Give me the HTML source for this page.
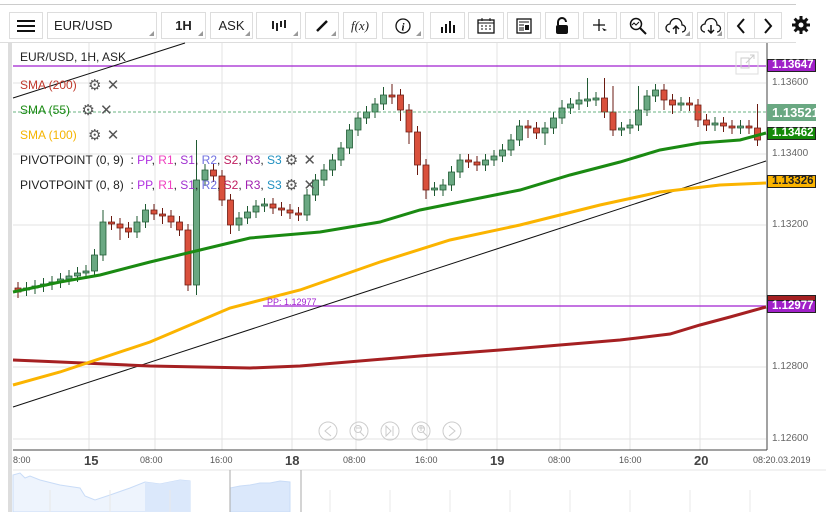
<!DOCTYPE html>
<html><head><meta charset="utf-8"><style>
body{margin:0;width:826px;height:512px;background:#fff;overflow:hidden;font-family:"Liberation Sans",sans-serif;position:relative}
.tb{position:absolute;top:12px;height:27px;border:1px solid #ddd;box-sizing:border-box;background:#fff;font-size:13px;color:#222;display:flex;align-items:center;justify-content:center}
.tb.dd::after{content:"";position:absolute;right:2px;bottom:2px;border-left:5px solid transparent;border-bottom:5px solid #999}
.lg{position:absolute;left:20px;font-size:12px}
.ic{color:#555;font-size:15px;font-weight:bold;margin-left:8px;position:relative;top:1px;font-family:"DejaVu Sans",sans-serif}
.lbl{position:absolute;left:767px;width:49px;height:13px;font-size:11.5px;color:#fff;box-sizing:border-box;border:1px solid #222;padding-left:4px;line-height:11px;font-weight:bold}
.ax{position:absolute;left:772px;font-size:10px;color:#666}
.xl{position:absolute;top:455px;font-size:9px;color:#555}
.xb{position:absolute;top:453px;font-size:13px;font-weight:bold;color:#444}
</style></head><body>
<div style="position:absolute;left:0;top:4px;width:796px;height:1px;background:#ccc"></div>
<div class="tb" style="left:9px;width:34px"><svg width="18" height="14"><path d="M0 2H18M0 7H18M0 12H18" stroke="#111" stroke-width="2"/></svg></div>
<div class="tb dd" style="left:47px;width:110px;justify-content:flex-start;padding-left:6px">EUR/USD</div>
<div class="tb dd" style="left:161px;width:45px;font-weight:bold">1H</div>
<div class="tb dd" style="left:210px;width:43px">ASK</div>
<div class="tb dd" style="left:256px;width:45px"><svg width="16" height="12"><path d="M2 1V9M6 3V11M10 1V7M14 0V8" stroke="#222" stroke-width="2"/></svg></div>
<div class="tb dd" style="left:305px;width:34px"><svg width="14" height="14"><path d="M2 12L12 2" stroke="#111" stroke-width="2.5"/></svg></div>
<div class="tb" style="left:343px;width:34px;font-family:'Liberation Serif',serif;font-style:italic">f(x)</div>
<div class="tb dd" style="left:382px;width:42px"><svg width="16" height="16"><circle cx="8" cy="8" r="7" fill="none" stroke="#111" stroke-width="1.3"/><text x="6.5" y="12.5" font-size="11" font-style="italic" font-family="Liberation Serif" font-weight="bold">i</text></svg></div>
<div class="tb" style="left:430px;width:35px"><svg width="16" height="14"><path d="M2 14V8M6 14V5M10 14V2M14 14V6" stroke="#111" stroke-width="2"/></svg></div>
<div class="tb" style="left:468px;width:36px"><svg width="18" height="16"><rect x="1" y="2" width="16" height="13" fill="none" stroke="#111" stroke-width="1.3"/><path d="M1 5H17M4 8h2M8 8h2M12 8h2M4 11h2M8 11h2M12 11h2M5 0V3M13 0V3" stroke="#111"/></svg></div>
<div class="tb" style="left:507px;width:34px"><svg width="16" height="16"><rect x="1" y="1" width="14" height="14" fill="none" stroke="#111" stroke-width="1.3"/><path d="M3 4H13M3 7H8M3 10H8M3 12H8" stroke="#111"/><rect x="9" y="7" width="4" height="5" fill="#111"/></svg></div>
<div class="tb" style="left:545px;width:34px"><svg width="14" height="18"><path d="M3 8V5a4 4 0 0 1 8 0" fill="none" stroke="#111" stroke-width="2"/><rect x="1" y="8" width="12" height="9" rx="2" fill="#111"/></svg></div>
<div class="tb" style="left:583px;width:34px"><svg width="16" height="16"><path d="M7 1V13M1 7H13" stroke="#111" stroke-width="1.3"/><path d="M10 10L15 12L12 13Z" fill="#111"/></svg></div>
<div class="tb" style="left:620px;width:35px"><svg width="18" height="18"><circle cx="7" cy="7" r="5.5" fill="none" stroke="#111" stroke-width="1.5"/><path d="M11 11L17 17" stroke="#111" stroke-width="2"/><path d="M3 8L5 6L7 8L10 5" stroke="#111" fill="none"/></svg></div>
<div class="tb dd" style="left:658px;width:35px"><svg width="22" height="16"><path d="M5 14a4 4 0 0 1 0-8a6 6 0 0 1 12 1a3.5 3.5 0 0 1 0 7" fill="none" stroke="#111" stroke-width="1.3"/><path d="M11 16V8M8 11L11 8L14 11" stroke="#111" stroke-width="1.5" fill="none"/></svg></div>
<div class="tb dd" style="left:697px;width:28px"><svg width="22" height="16"><path d="M5 14a4 4 0 0 1 0-8a6 6 0 0 1 12 1a3.5 3.5 0 0 1 0 7" fill="none" stroke="#111" stroke-width="1.3"/><path d="M11 7V15M8 12L11 15L14 12" stroke="#111" stroke-width="1.5" fill="none"/></svg></div>
<div class="tb" style="left:727px;width:28px"><svg width="10" height="16"><path d="M8 1L2 8L8 15" stroke="#111" stroke-width="2" fill="none"/></svg></div>
<div class="tb" style="left:754px;width:28px"><svg width="10" height="16"><path d="M2 1L8 8L2 15" stroke="#111" stroke-width="2" fill="none"/></svg></div>
<div style="position:absolute;left:792px;top:16px"><svg width="18" height="18" viewBox="0 0 18 18"><g fill="#111"><circle cx="9" cy="9" r="6"/><rect x="7.5" y="0" width="3" height="18"/><rect x="0" y="7.5" width="18" height="3"/><rect x="7.5" y="0" width="3" height="18" transform="rotate(45 9 9)"/><rect x="7.5" y="0" width="3" height="18" transform="rotate(-45 9 9)"/></g><circle cx="9" cy="9" r="2.5" fill="#fff"/></svg></div>
<div style="position:absolute;left:0;top:42px;width:796px;height:1px;background:#ddd"></div>
<div style="position:absolute;left:8px;top:43px;width:4px;height:469px;background:#ddd"></div>

<svg width="826" height="512" style="position:absolute;left:0;top:0">
<g stroke="#e3e3e3" stroke-width="1">
<path d="M13 83H766M13 154H766M13 225H766M13 296H766M13 367H766M13 439H766"/>
<path d="M89 43V450M155 43V450M222 43V450M292 43V450M356 43V450M427 43V450M497 43V450M560 43V450M630 43V450M700 43V450"/>
</g>
<path stroke="#1f5a32" stroke-width="1" d="M26.5 282V296M35 280V294M43.5 278V292M52 276V290M60.5 273V288M69 270V285M77.5 267V282M86 265V279M94.5 249V277M103 210V261M137 216V238M145.5 204V228M196.5 140V295M205 164V186M239 212V231M247.5 206V224M256 200V218M264.5 198V212M307 189V221M315.5 174V201M324 164V186M332.5 154V176M341 142V166M349.5 124V154M358 112V136M366.5 106V124M375 98V118M383.5 87V110M434.5 182V196M443 179V196M451.5 166V191M460 154V178M485.5 154V171M494 150V166M502.5 144V162M511 134V156M519.5 120V146M545 122V145M553.5 112V134M562 100V124M570.5 98V114M579 92V110M587.5 78V107M596 92V106M621.5 122V136M630 119V134M638.5 86V131M647 90V116M655.5 84V102M681 97V111M715 117V131M740.5 120V134"/>
<path fill="#6aa882" stroke="#1f5a32" stroke-width="0.8" d="M23.5 288h6v2h-6zM32 286h6v2h-6zM40.5 284h6v2h-6zM49 282h6v2h-6zM57.5 279h6v3h-6zM66 276h6v3h-6zM74.5 273h6v3h-6zM83 271h6v2h-6zM91.5 255h6v16h-6zM100 222h6v33h-6zM134 222h6v10h-6zM142.5 210h6v12h-6zM193.5 180h6v105h-6zM202 170h6v10h-6zM236 218h6v7h-6zM244.5 212h6v6h-6zM253 206h6v6h-6zM261.5 204h6v2h-6zM304 195h6v20h-6zM312.5 180h6v15h-6zM321 170h6v10h-6zM329.5 160h6v10h-6zM338 148h6v12h-6zM346.5 130h6v18h-6zM355 118h6v12h-6zM363.5 112h6v6h-6zM372 104h6v8h-6zM380.5 95h6v9h-6zM431.5 188h6v2h-6zM440 185h6v5h-6zM448.5 172h6v13h-6zM457 160h6v12h-6zM482.5 160h6v5h-6zM491 156h6v4h-6zM499.5 150h6v6h-6zM508 140h6v10h-6zM516.5 126h6v14h-6zM542 128h6v5h-6zM550.5 118h6v10h-6zM559 108h6v10h-6zM567.5 104h6v4h-6zM576 100h6v4h-6zM584.5 99h6v2h-6zM593 98h6v2h-6zM618.5 128h6v2h-6zM627 125h6v3h-6zM635.5 110h6v15h-6zM644 96h6v14h-6zM652.5 90h6v6h-6zM678 103h6v2h-6zM712 123h6v2h-6zM737.5 126h6v2h-6z"/>
<path stroke="#6a1a10" stroke-width="1" d="M18 282V298M111.5 216V230M120 218V240M128.5 222V238M154 204V220M162.5 208V224M171 210V228M179.5 216V236M188 224V291M213.5 164V182M222 170V206M230.5 194V234M273 198V214M281.5 202V216M290 204V219M298.5 207V221M392 84V104M400.5 89V121M409 104V144M417.5 126V175M426 159V199M468.5 154V168M477 156V171M528 120V138M536.5 122V139M604.5 78V118M613 86V136M664 84V110M672.5 94V114M689.5 97V111M698 99V127M706.5 114V131M723.5 117V132M732 120V134M749 120V134M757.5 104V146"/>
<path fill="#d9503c" stroke="#6a1a10" stroke-width="0.8" d="M15 288h6v4h-6zM108.5 222h6v2h-6zM117 224h6v4h-6zM125.5 228h6v4h-6zM151 210h6v4h-6zM159.5 214h6v2h-6zM168 216h6v6h-6zM176.5 222h6v8h-6zM185 230h6v55h-6zM210.5 170h6v6h-6zM219 176h6v24h-6zM227.5 200h6v25h-6zM270 204h6v4h-6zM278.5 208h6v2h-6zM287 210h6v3h-6zM295.5 213h6v2h-6zM389 95h6v2h-6zM397.5 95h6v15h-6zM406 110h6v22h-6zM414.5 132h6v33h-6zM423 165h6v25h-6zM465.5 160h6v2h-6zM474 162h6v3h-6zM525 126h6v2h-6zM533.5 128h6v5h-6zM601.5 98h6v14h-6zM610 112h6v18h-6zM661 90h6v10h-6zM669.5 100h6v5h-6zM686.5 103h6v2h-6zM695 105h6v15h-6zM703.5 120h6v5h-6zM720.5 123h6v3h-6zM729 126h6v2h-6zM746 126h6v2h-6zM754.5 128h6v12h-6z"/>
<path d="M13 66H766" stroke="#a020d0" stroke-width="1.2"/>
<path d="M263 306H766" stroke="#a020d0" stroke-width="1.2"/>
<path d="M13 112H766" stroke="#3a9a5a" stroke-dasharray="3,2" stroke-width="0.8"/>
<path d="M13 98L185 43" stroke="#111" stroke-width="1"/>
<path d="M13 407L766 161" stroke="#111" stroke-width="1"/>
<path d="M13 360L60 362L150 366L250 368L300 366L420 356L500 350L560 345L620 340L670 334L700 325L730 317L766 307" fill="none" stroke="#a52022" stroke-width="3"/>
<path d="M13 385L60 372L150 342L230 308L300 290L380 262L450 240L520 225L600 205L660 192L720 185L766 183" fill="none" stroke="#fbb400" stroke-width="3"/>
<path d="M13 292L60 282L100 275L150 262L200 250L250 238L320 232L380 222L420 210L470 200L520 190L570 175L620 162L660 150L700 143L740 140L766 133" fill="none" stroke="#1a8a12" stroke-width="3"/>
<path d="M767 43V450M13 450H767" stroke="#444" stroke-width="1"/>
<rect x="736" y="52" width="22" height="22" fill="none" stroke="#ddd"/>
<path d="M741 58h8v10h-8z" fill="none" stroke="#ccc"/><path d="M746 63L754 55M750 55h4v4" stroke="#ccc" fill="none"/>
<g fill="none" stroke="#ccc"><circle cx="328" cy="431" r="9"/><circle cx="359" cy="431" r="9"/><circle cx="390" cy="431" r="9"/><circle cx="421" cy="431" r="9"/><circle cx="452" cy="431" r="9"/>
<path d="M331 426L325 431L331 436M449 426L455 431L449 436M386 426L391 431L386 436ZM393 426V436M356 428h5M419 428h5M421 426v5"/><circle cx="358" cy="429" r="3.5"/><circle cx="421" cy="429" r="3.5"/><path d="M360 432L364 436M423 432L427 436"/></g>
<path d="M13 470H826" stroke="#e5e5e5"/>
<path d="M13 512V475L20 473L25 478L30 476L40 480L60 485L80 488L85 496L95 500L110 495L130 488L145 482L160 484L180 480L190 481V512Z" fill="#eef4fd" stroke="#c9dcf7"/>
<path d="M145 512V482L160 484L180 480L190 481V512Z" fill="#dbe8fb"/>
<path d="M230 512V488L240 486L250 485L260 483L270 483L280 481L290 482V512Z" fill="#dbe8fb" stroke="#c9dcf7"/>
<path d="M230 470V512M301 470V512" stroke="#aaa"/>
<g stroke="#e8e8e8"><path d="M50 490V512M110 490V512M170 490V512M330 490V512M390 490V512M450 490V512M510 490V512M570 490V512M630 490V512M690 490V512M750 490V512"/></g>
</svg>

<div class="lg" style="top:50px;color:#222">EUR/USD, 1H, ASK</div>
<div class="lg" style="top:75px;color:#c0392b">SMA (200) <span class="ic">⚙ ✕</span></div>
<div class="lg" style="top:100px;color:#1a8a12">SMA (55) <span class="ic">⚙ ✕</span></div>
<div class="lg" style="top:125px;color:#f5b400">SMA (100) <span class="ic">⚙ ✕</span></div>
<div class="lg" style="top:150px;color:#222">PIVOTPOINT (0, 9) &nbsp;: <span style="color:#b030e0">PP</span>, <span style="color:#f040c0">R1</span>, <span style="color:#a030d0">S1</span>, <span style="color:#7070e0">R2</span>, <span style="color:#c02060">S2</span>, <span style="color:#a020b0">R3</span>, <span style="color:#2090c0">S3</span><span class="ic" style="margin-left:3px">⚙ ✕</span></div>
<div class="lg" style="top:175px;color:#222">PIVOTPOINT (0, 8) &nbsp;: <span style="color:#b030e0">PP</span>, <span style="color:#f040c0">R1</span>, <span style="color:#a030d0">S1</span>, <span style="color:#7070e0">R2</span>, <span style="color:#c02060">S2</span>, <span style="color:#a020b0">R3</span>, <span style="color:#2090c0">S3</span><span class="ic" style="margin-left:3px">⚙ ✕</span></div>
<div style="position:absolute;left:267px;top:297px;font-size:9px;color:#a020d0">PP: 1.12977</div>

<div class="lbl" style="top:59px;background:#a020c8">1.13647</div>
<div class="ax" style="top:77px">1.13600</div>
<div class="lbl" style="top:104px;background:#6aa882;border-color:#6aa882;font-size:13px;height:17px;line-height:15px">1.13521</div>
<div class="lbl" style="top:127px;background:#148a08">1.13462</div>
<div class="ax" style="top:148px">1.13400</div>
<div class="lbl" style="top:175px;background:#fbb400;color:#222">1.13326</div>
<div class="ax" style="top:219px">1.13200</div>
<div class="lbl" style="top:295px;background:#a52022;height:6px"></div>
<div class="lbl" style="top:300px;background:#a020c8">1.12977</div>
<div class="ax" style="top:361px">1.12800</div>
<div class="ax" style="top:433px">1.12600</div>

<div class="xl" style="left:13px">8:00</div>
<div class="xb" style="left:84px">15</div>
<div class="xl" style="left:140px">08:00</div>
<div class="xl" style="left:210px">16:00</div>
<div class="xb" style="left:285px">18</div>
<div class="xl" style="left:343px">08:00</div>
<div class="xl" style="left:415px">16:00</div>
<div class="xb" style="left:490px">19</div>
<div class="xl" style="left:548px">08:00</div>
<div class="xl" style="left:619px">16:00</div>
<div class="xb" style="left:694px">20</div>
<div class="xl" style="left:753px">08:20.03.2019</div>
</body></html>
